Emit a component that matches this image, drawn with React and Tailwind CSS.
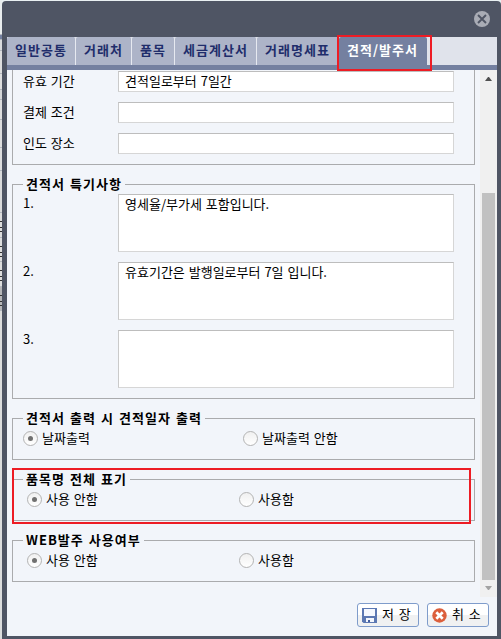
import clsx from 'clsx'

const tabs = [
  { label: '일반공통', width: 'w-[69px]' },
  { label: '거래처', width: 'w-[56px]' },
  { label: '품목', width: 'w-[43px]' },
  { label: '세금계산서', width: 'w-[82px]' },
  { label: '거래명세표', width: 'w-[82px]' },
  { label: '견적/발주서', width: 'w-[88px]', active: true },
]

const terms = [
  { label: '유효 기간', value: '견적일로부터 7일간' },
  { label: '결제 조건', value: '' },
  { label: '인도 장소', value: '' },
]

const remarks = ['영세율/부가세 포함입니다.', '유효기간은 발행일로부터 7일 입니다.', '']

// rows of the grid that stays visible behind the dialog
const behind = [
  'h-[35px] bg-[#e9edee]',
  'h-[5px] bg-[#7480a0]',
  'h-[11px] bg-[#d9dbdd]',
  'h-[23px] bg-[#dddedf]',
  'h-[16px] bg-[#dddedf]',
  'h-[10px] bg-[#d3d5d8]',
  'h-[20px] bg-[#dddedf]',
  'h-[28px] bg-[#dddedf]',
  'h-[23px] bg-[#dddedf]',
  'h-[42px] bg-[#d9dadb]',
]

function Backdrop() {
  return (
    <div className="w-[2px] h-full shrink-0 overflow-hidden flex flex-col bg-[#dcdddd]">
      {behind.map((row, i) => (
        <div key={i} className={clsx('shrink-0 border-b border-[#b4b8bf]', row)} />
      ))}
      {[0, 1, 2, 3].map(i => (
        <div key={i} className={clsx('h-[24.5px] shrink-0 border-b border-[#b4b8bf] pt-[8px]', i === 3 && 'bg-[#b5b6b8]')}>
          <div className="h-px bg-[#333]" />
          <div className="h-[5px] mt-[5px] border-y border-[#333]" />
        </div>
      ))}
    </div>
  )
}

function Group({ title, className, children }) {
  return (
    <fieldset className={clsx('mx-[5px] mt-3 shrink-0 border border-[#aaabad]', className)}>
      <legend className="ml-[10px] h-[15px] pl-[3px] pr-[3px] text-[13px] leading-[13px] font-bold tracking-[1.04px] whitespace-nowrap">
        {title}
      </legend>
      {children}
    </fieldset>
  )
}

function Radio({ label, checked, className }) {
  return (
    <label className={clsx('flex items-center h-[15px] gap-1 whitespace-nowrap', className)}>
      <span className="w-[15px] h-[15px] shrink-0 rounded-full border border-[#b3b3b3] bg-linear-to-b from-[#f0f0f0] to-white flex items-center justify-center">
        {checked && <span className="w-[5px] h-[5px] rounded-full bg-[#707070]" />}
      </span>
      <span className="leading-[15px] -mt-[3px]">{label}</span>
    </label>
  )
}

function Button({ icon, children }) {
  return (
    <button className="w-[62px] h-6 flex items-center gap-[5px] pl-1 rounded-[3px] border border-[#7f9ccb] bg-linear-to-b from-white from-50% to-[#f0f1f2] to-50% whitespace-nowrap">
      {icon}
      <span className="leading-4 -mt-[2px] [word-spacing:2px]">{children}</span>
    </button>
  )
}

const SaveIcon = () => (
  <svg width="15" height="15" viewBox="0 0 15 15" className="shrink-0">
    <path d="M0 0h15v15H1.500L0 13.500z" fill="#5c78b3" />
    <path d="M2 1h11v7H2z" fill="#f5f8ff" />
    <path d="M4 10h8v4H4z" fill="#f3f6fc" />
    <path d="M6 12h2v2H6z" fill="#455f9e" />
  </svg>
)

const CancelIcon = () => (
  <svg width="15" height="15" viewBox="0 0 15 15" className="shrink-0">
    <circle cx="7.500" cy="7.500" r="7.200" fill="#dc5f3c" />
    <path d="M4.300 4.300l6.400 6.400M10.700 4.300l-6.400 6.400" stroke="#fff" strokeWidth="2.700" />
  </svg>
)

const CloseIcon = () => (
  <svg width="16" height="16" viewBox="0 0 16 16">
    <circle cx="8" cy="8" r="8" fill="#a9acb5" />
    <path d="M4 4l8 8M12 4l-8 8" stroke="#4f5564" strokeWidth="1.900" />
  </svg>
)

function Tabs() {
  return (
    <div className="relative shrink-0 h-[33px] border-b-[5px] border-[#7480a0] bg-[#e0e3eb] flex">
      {tabs.map(t => (
        <div
          key={t.label}
          className={clsx(
            'h-7 shrink-0 flex items-center pl-2 pb-[2px] text-[13px] font-bold tracking-[1.04px] whitespace-nowrap rounded-t-[2px]',
            t.width,
            t.active ? 'bg-[#7480a0] text-white' : 'bg-[#adb4c8] text-[#1f2d6b] border-r border-[#e6e9f0]',
          )}
        >
          {t.label}
        </div>
      ))}
      <div className="absolute left-[330px] -top-[2px] w-[95px] h-9 border-2 border-[#ed1c24]" />
    </div>
  )
}

function ScrollBar() {
  return (
    <div className="w-[17px] h-[527px] shrink-0 bg-[#f0f0f0] flex flex-col items-center">
      <svg width="7" height="4" viewBox="0 0 7 4" className="mt-[7px] shrink-0">
        <path d="M3 0h1l3 4H0z" fill="#505050" />
      </svg>
      <div className="mt-[112px] w-[13px] h-[387px] shrink-0 bg-[#c1c1c1]" />
      <svg width="7" height="4" viewBox="0 0 7 4" className="mt-[6px] shrink-0">
        <path d="M0 0h7l-3 4H3z" fill="#a3a3a3" />
      </svg>
    </div>
  )
}

const field = 'w-[336px] shrink-0 bg-white border border-[#d6d6d6] border-t-[#bdbdbd] border-l-[#cacaca] pl-[6px]'

export default function App() {
  return (
    <div className="w-[501px] h-[639px] overflow-hidden flex bg-[#e9f0f2] text-black text-[13px] [word-spacing:1px] font-['Noto_Sans_CJK_KR','Liberation_Sans',sans-serif]">
      <Backdrop />
      <div className="w-[499px] h-[638px] mt-px rounded-t-[4px] bg-[#4f5564] flex flex-col px-[5px] pr-1 pb-[3px]">
        <div className="h-9 shrink-0 flex justify-end pt-[10px] pr-[7px]">
          <CloseIcon />
        </div>
        <div className="h-[599px] flex flex-col bg-[#f2f5fa]">
          <Tabs />
          <div className="h-[527px] shrink-0 flex">
            <div className="w-[473px] flex flex-col overflow-hidden">
              <div className="mx-[5px] h-[95px] shrink-0 border border-t-0 border-[#aaabad] pt-px flex flex-col gap-[10px]">
                {terms.map(t => (
                  <div key={t.label} className="flex h-[21px]">
                    <span className="w-[105px] pl-[10px] shrink-0 leading-[19px]">{t.label}</span>
                    <div className={clsx(field, 'h-[21px] leading-[17px]')}>{t.value}</div>
                  </div>
                ))}
              </div>

              <Group title="견적서 특기사항" className="h-[222px]">
                <div className="flex flex-col gap-[10px] pt-[2px]">
                  {remarks.map((text, i) => (
                    <div key={i} className="flex h-[58px]">
                      <span className="w-[105px] pl-[10px] shrink-0 leading-[17px]">{i + 1}.</span>
                      <div className={clsx(field, 'h-[58px] leading-[17px]')}>{text}</div>
                    </div>
                  ))}
                </div>
              </Group>

              <Group title="견적서 출력 시 견적일자 출력" className="h-[49px]">
                <div className="flex pt-[5px] pl-[10px]">
                  <Radio label="날짜출력" checked className="w-[220px]" />
                  <Radio label="날짜출력 안함" />
                </div>
              </Group>

              <div className="relative shrink-0">
                <Group title="품목명 전체 표기" className="h-[49px]">
                  <div className="flex pt-[5px] pl-[14px]">
                    <Radio label="사용 안함" checked className="w-[212px]" />
                    <Radio label="사용함" />
                  </div>
                </Group>
                <div className="absolute left-[5px] top-2 w-[459px] h-14 border-2 border-[#ed1c24]" />
              </div>

              <Group title="WEB발주 사용여부" className="h-[49px]">
                <div className="flex pt-[5px] pl-[14px]">
                  <Radio label="사용 안함" checked className="w-[212px]" />
                  <Radio label="사용함" />
                </div>
              </Group>
            </div>
            <ScrollBar />
          </div>
          <div className="flex justify-end gap-2 pt-[6px] pr-2">
            <Button icon={<SaveIcon />}>저 장</Button>
            <Button icon={<CancelIcon />}>취 소</Button>
          </div>
        </div>
      </div>
    </div>
  )
}
